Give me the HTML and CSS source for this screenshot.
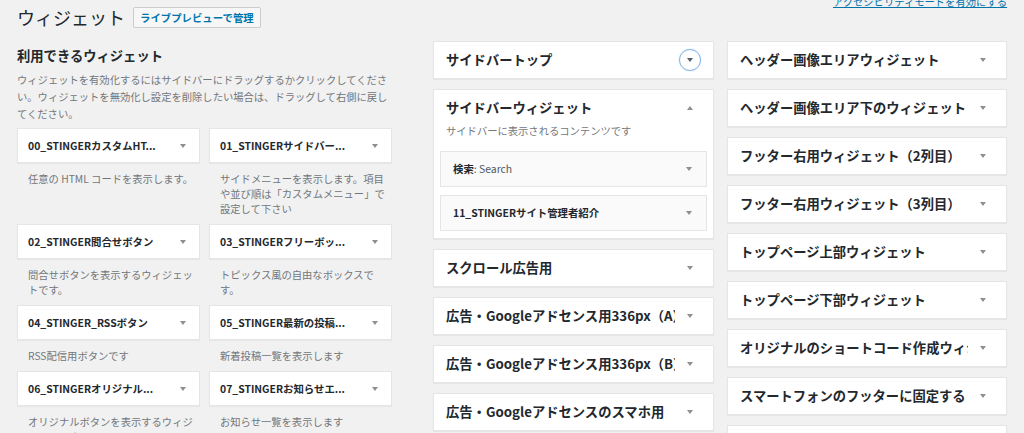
FILE: index.html
```html
<!DOCTYPE html>
<html lang="ja">
<head>
<meta charset="utf-8">
<title>ウィジェット</title>
<link rel="stylesheet" href="styles.css">
</head>
<body>
<div class="page">
  <header class="top">
    <div class="title-group">
      <h1>ウィジェット</h1>
      <a class="btn" href="#">ライブプレビューで管理</a>
    </div>
    <a class="a11y" href="#">アクセシビリティモードを有効にする</a>
  </header>

  <div class="cols">
    <section class="available">
      <h2>利用できるウィジェット</h2>
      <p class="intro">ウィジェットを有効化するにはサイドバーにドラッグするかクリックしてください。ウィジェットを無効化し設定を削除したい場合は、ドラッグして右側に戻してください。</p>
      <div class="wgrid">
        <div class="witem">
          <div class="wtop"><h3>00_STINGERカスタムHT...</h3><span class="tg"><span class="tri"></span></span></div>
          <p class="wdesc">任意の HTML コードを表示します。</p>
        </div>
        <div class="witem">
          <div class="wtop"><h3>01_STINGERサイドバー...</h3><span class="tg"><span class="tri"></span></span></div>
          <p class="wdesc">サイドメニューを表示します。項目や並び順は「カスタムメニュー」で設定して下さい</p>
        </div>
        <div class="witem">
          <div class="wtop"><h3>02_STINGER問合せボタン</h3><span class="tg"><span class="tri"></span></span></div>
          <p class="wdesc">問合せボタンを表示するウィジェットです。</p>
        </div>
        <div class="witem">
          <div class="wtop"><h3>03_STINGERフリーボッ...</h3><span class="tg"><span class="tri"></span></span></div>
          <p class="wdesc">トピックス風の自由なボックスです。</p>
        </div>
        <div class="witem">
          <div class="wtop"><h3>04_STINGER_RSSボタン</h3><span class="tg"><span class="tri"></span></span></div>
          <p class="wdesc">RSS配信用ボタンです</p>
        </div>
        <div class="witem">
          <div class="wtop"><h3>05_STINGER最新の投稿...</h3><span class="tg"><span class="tri"></span></span></div>
          <p class="wdesc">新着投稿一覧を表示します</p>
        </div>
        <div class="witem">
          <div class="wtop"><h3>06_STINGERオリジナル...</h3><span class="tg"><span class="tri"></span></span></div>
          <p class="wdesc">オリジナルボタンを表示するウィジェットです</p>
        </div>
        <div class="witem">
          <div class="wtop"><h3>07_STINGERお知らせエ...</h3><span class="tg"><span class="tri"></span></span></div>
          <p class="wdesc">お知らせ一覧を表示します</p>
        </div>
      </div>
    </section>

    <section class="sb-col">
      <div class="sb">
        <div class="sb-head"><h2>サイドバートップ</h2><span class="sb-tg"><span class="ind focus"><span class="tri dark"></span></span></span></div>
      </div>
      <div class="sb open">
        <div class="sb-head"><h2>サイドバーウィジェット</h2><span class="sb-tg"><span class="ind"><span class="tri up"></span></span></span></div>
        <p class="sb-desc">サイドバーに表示されるコンテンツです</p>
        <div class="sb-list">
          <div class="iw"><h3>検索<span class="in-title">: Search</span></h3><span class="tg"><span class="tri"></span></span></div>
          <div class="iw"><h3>11_STINGERサイト管理者紹介</h3><span class="tg"><span class="tri"></span></span></div>
        </div>
      </div>
      <div class="sb">
        <div class="sb-head"><h2>スクロール広告用</h2><span class="sb-tg"><span class="ind"><span class="tri"></span></span></span></div>
      </div>
      <div class="sb">
        <div class="sb-head"><h2>広告・Googleアドセンス用336px（A）</h2><span class="sb-tg"><span class="ind"><span class="tri"></span></span></span></div>
      </div>
      <div class="sb">
        <div class="sb-head"><h2>広告・Googleアドセンス用336px（B）</h2><span class="sb-tg"><span class="ind"><span class="tri"></span></span></span></div>
      </div>
      <div class="sb">
        <div class="sb-head"><h2>広告・Googleアドセンスのスマホ用</h2><span class="sb-tg"><span class="ind"><span class="tri"></span></span></span></div>
      </div>
    </section>

    <section class="sb-col right">
      <div class="sb">
        <div class="sb-head"><h2>ヘッダー画像エリアウィジェット</h2><span class="sb-tg"><span class="ind"><span class="tri"></span></span></span></div>
      </div>
      <div class="sb">
        <div class="sb-head"><h2>ヘッダー画像エリア下のウィジェット</h2><span class="sb-tg"><span class="ind"><span class="tri"></span></span></span></div>
      </div>
      <div class="sb">
        <div class="sb-head"><h2>フッター右用ウィジェット（2列目）</h2><span class="sb-tg"><span class="ind"><span class="tri"></span></span></span></div>
      </div>
      <div class="sb">
        <div class="sb-head"><h2>フッター右用ウィジェット（3列目）</h2><span class="sb-tg"><span class="ind"><span class="tri"></span></span></span></div>
      </div>
      <div class="sb">
        <div class="sb-head"><h2>トップページ上部ウィジェット</h2><span class="sb-tg"><span class="ind"><span class="tri"></span></span></span></div>
      </div>
      <div class="sb">
        <div class="sb-head"><h2>トップページ下部ウィジェット</h2><span class="sb-tg"><span class="ind"><span class="tri"></span></span></span></div>
      </div>
      <div class="sb">
        <div class="sb-head"><h2>オリジナルのショートコード作成ウィジェット</h2><span class="sb-tg"><span class="ind"><span class="tri"></span></span></span></div>
      </div>
      <div class="sb">
        <div class="sb-head"><h2>スマートフォンのフッターに固定する</h2><span class="sb-tg"><span class="ind"><span class="tri"></span></span></span></div>
      </div>
      <div class="sb">
        <div class="sb-head"><h2>&nbsp;</h2><span class="sb-tg"><span class="ind"><span class="tri"></span></span></span></div>
      </div>
    </section>
  </div>
</div>
</body>
</html>
```

FILE: styles.css
```css
* { box-sizing: border-box; }

html, body {
  margin: 0;
  background: #f1f1f1;
  overflow: hidden;
}

body {
  font-family: "Noto Sans CJK JP", "Noto Sans", sans-serif;
  color: #23282d;
}

.page {
  width: 1024px;
  height: 433px;
  overflow: hidden;
}

/* header */
.top {
  display: flex;
  align-items: flex-start;
  height: 41px;
  padding: 0 17px;
}

.title-group {
  display: flex;
  align-items: center;
  gap: 8px;
  margin-top: 5px;
}

h1 {
  margin: 0;
  font-size: 18px;
  font-weight: 400;
  line-height: 24px;
  color: #23282d;
}

.btn {
  display: inline-block;
  height: 21px;
  padding: 0 6px;
  font-size: 10.4px;
  font-weight: 700;
  line-height: 19px;
  color: #0073aa;
  background: #f7f7f7;
  border: 1px solid #cccccc;
  border-radius: 2px;
  text-decoration: none;
}

.a11y {
  margin-left: auto;
  margin-top: -6px;
  font-size: 10.3px;
  line-height: 15px;
  color: #0073aa;
  text-decoration: underline;
}

/* columns */
.cols {
  display: flex;
  align-items: flex-start;
  padding: 0 17px;
}

.available {
  width: 375px;
  margin-right: 41px;
}

.available h2 {
  margin: 5px 0 0;
  font-size: 13.3px;
  font-weight: 700;
  line-height: 20px;
}

.intro {
  margin: 5px 0 0;
  font-size: 10.3px;
  line-height: 17px;
  color: #72777c;
}

.wgrid {
  display: grid;
  grid-template-columns: 183px 183px;
  column-gap: 9px;
  margin-top: 6px;
}

.wtop {
  display: flex;
  align-items: center;
  height: 35px;
  padding-left: 10px;
  background: #fff;
  border: 1px solid #e5e5e5;
  box-shadow: 0 1px 1px rgba(0, 0, 0, 0.04);
}

.wtop h3,
.iw h3 {
  flex: 1;
  min-width: 0;
  margin: 0;
  font-size: 10.4px;
  font-weight: 700;
  line-height: 14px;
  white-space: nowrap;
  overflow: hidden;
}

.tg {
  flex: 0 0 32px;
  display: flex;
  justify-content: center;
  align-items: center;
}

.wdesc {
  margin: 0;
  padding: 8px 0 8px 11px;
  font-size: 10.3px;
  line-height: 15px;
  color: #72777c;
}

/* sidebars */
.sb-col {
  width: 281px;
  display: flex;
  flex-direction: column;
  gap: 10px;
}

.sb-col.right {
  width: 280px;
  margin-left: 13px;
}

.sb {
  background: #fff;
  border: 1px solid #e5e5e5;
  box-shadow: 0 1px 1px rgba(0, 0, 0, 0.04);
}

.sb-head {
  display: flex;
  align-items: flex-start;
}

.sb-head h2 {
  flex: 1;
  min-width: 0;
  margin: 0;
  padding: 9px 0 9px 12px;
  font-size: 13.3px;
  font-weight: 700;
  line-height: 18px;
  white-space: nowrap;
  overflow: hidden;
}

.sb.open .sb-head h2 {
  padding-bottom: 4px;
}

.sb-tg {
  flex: 0 0 38px;
  display: flex;
  justify-content: flex-end;
  padding: 7px 12px 0 0;
}

.ind {
  width: 22px;
  height: 22px;
  border-radius: 50%;
  display: flex;
  align-items: center;
  justify-content: center;
}

.ind.focus {
  border: 1.5px solid #7eb4e6;
  box-shadow: 0 0 1px rgba(91, 157, 217, 0.6);
}

.tri {
  width: 0;
  height: 0;
  border-left: 3.5px solid transparent;
  border-right: 3.5px solid transparent;
  border-top: 4px solid #8c8f94;
}

.tri.dark {
  border-top-color: #555d66;
}

.tri.up {
  border-top: 0;
  border-bottom: 4px solid #8c8f94;
}

.sb-desc {
  margin: 2px 0 0;
  padding: 0 12px;
  font-size: 10.3px;
  line-height: 16px;
  color: #72777c;
}

.sb-list {
  display: flex;
  flex-direction: column;
  gap: 8px;
  padding: 12px 6px 7px;
}

.iw {
  display: flex;
  align-items: center;
  height: 36px;
  padding-left: 12px;
  background: #fafafa;
  border: 1px solid #e5e5e5;
}

.iw .tg {
  flex-basis: 34px;
}

.in-title {
  font-weight: 400;
  color: #50575e;
}
```
